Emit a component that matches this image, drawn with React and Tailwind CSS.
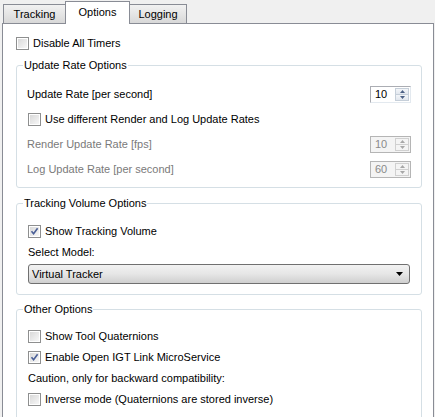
import React from 'react';

const font = { fontFamily: '"Liberation Sans", Arial, sans-serif' };

function CheckBox({ checked, label, className = '' }) {
  return (
    <div className={`flex items-center gap-[4px] ${className}`}>
      <div className="w-[13px] h-[13px] border border-[#8e8f8f] bg-white p-px shrink-0">
        <div className="w-full h-full bg-gradient-to-br from-[#d9d9d9] to-[#f7f7f7] relative">
          {checked && (
            <svg viewBox="0 0 9 9" className="absolute inset-0 w-[9px] h-[9px]">
              <path d="M1.5 4.2 L3.6 6.8 L7.6 1.2" fill="none" stroke="#4a5f97" strokeWidth="1.6" />
            </svg>
          )}
        </div>
      </div>
      <span className="text-[11px] text-black leading-none">{label}</span>
    </div>
  );
}

function Arrow({ up, color }) {
  return (
    <svg viewBox="0 0 5 3" className="w-[5px] h-[3px]">
      <path d={up ? 'M0 3 L2.5 0 L5 3 Z' : 'M0 0 L2.5 3 L5 0 Z'} fill={color} />
    </svg>
  );
}

function SpinBox({ value, disabled }) {
  const arrow = disabled ? '#a7a7a7' : '#4d6185';
  return (
    <div
      className={`w-[41px] h-[17px] border flex items-stretch ${
        disabled ? 'border-[#b5b5b5] bg-[#f4f4f4]' : 'border-[#abadb3] border-r-[#e3e9ef] border-b-[#e3e9ef] bg-white'
      }`}
    >
      <span className={`flex-1 pl-[4px] text-[11px] flex items-center ${disabled ? 'text-[#8a8a8a]' : 'text-black'}`}>
        {value}
      </span>
      <div className="w-[14px] flex flex-col my-px mr-px">
        <div className={`flex-1 flex items-center justify-center border ${disabled ? 'border-[#d0d0d0] bg-[#f4f4f4]' : 'border-[#c6cfd9] bg-gradient-to-b from-[#f4f6f9] to-[#e2e7ee]'}`}>
          <Arrow up color={arrow} />
        </div>
        <div className={`flex-1 flex items-center justify-center border border-t-0 ${disabled ? 'border-[#d0d0d0] bg-[#f4f4f4]' : 'border-[#c6cfd9] bg-gradient-to-b from-[#f4f6f9] to-[#e2e7ee]'}`}>
          <Arrow color={arrow} />
        </div>
      </div>
    </div>
  );
}

function Group({ title, className = '', bodyClass = '', children }) {
  return (
    <fieldset className={`border border-[#d5dfe5] rounded-[3px] ${className}`}>
      <legend className="ml-[6px] px-[1px] h-[15px] leading-[15px] text-[11px] text-black">{title}</legend>
      <div className={bodyClass}>{children}</div>
    </fieldset>
  );
}

export default function App() {
  return (
    <div className="w-[435px] h-[417px] bg-[#f0f0f0] overflow-hidden flex flex-col" style={font}>
      {/* Tabs */}
      <div className="h-[23px] flex items-end pl-[3px] shrink-0">
        <div className="w-[62px] h-[19px] border border-b-0 border-r-0 border-[#898c95] bg-gradient-to-b from-[#f2f2f2] to-[#d8d8d8] flex items-center justify-center text-[11px] text-black">
          Tracking
        </div>
        <div className="relative z-10 -mb-px w-[65px] h-[23px] border border-b-0 border-[#898c95] bg-white flex items-center justify-center pb-[1px] text-[11px] text-black">
          Options
        </div>
        <div className="w-[57px] h-[19px] border border-b-0 border-l-0 border-[#898c95] bg-gradient-to-b from-[#f2f2f2] to-[#d8d8d8] flex items-center justify-center text-[11px] text-black">
          Logging
        </div>
      </div>

      {/* Pane */}
      <div className="ml-[2px] w-[432px] flex-1 border border-[#898c95] bg-white pl-[13px] pr-[11px]">
        <CheckBox label="Disable All Timers" className="mt-[9px] h-[20px]" />

        <Group title="Update Rate Options" className="mt-[5px]" bodyClass="px-[10px] pt-[9px] pb-[5px]">
          <div className="h-[25px] flex items-center justify-between">
            <span className="text-[11px] text-black">Update Rate [per second]</span>
            <SpinBox value="10" />
          </div>
          <div className="h-[25px] flex items-center">
            <CheckBox label="Use different Render and Log Update Rates" className="ml-px" />
          </div>
          <div className="h-[25px] flex items-center justify-between">
            <span className="text-[11px] text-[#7a7a7a]">Render Update Rate [fps]</span>
            <SpinBox value="10" disabled />
          </div>
          <div className="h-[25px] flex items-center justify-between">
            <span className="text-[11px] text-[#7a7a7a]">Log Update Rate [per second]</span>
            <SpinBox value="60" disabled />
          </div>
        </Group>

        <Group title="Tracking Volume Options" className="mt-[8px]" bodyClass="px-[11px] pt-[10px] pb-[10px]">
          <CheckBox checked label="Show Tracking Volume" className="h-[20px]" />
          <div className="mt-px h-[20px] flex items-center text-[11px] text-black">Select Model:</div>
          <div className="mt-[2px] h-[20px] border border-[#707070] rounded-[3px] flex items-center justify-between pl-[3px] pr-[6px] bg-gradient-to-b from-[#f2f2f2] via-[#e6e6e6] to-[#cfcfcf]">
            <span className="text-[11px] text-black">Virtual Tracker</span>
            <svg viewBox="0 0 7 4" className="w-[7px] h-[4px]">
              <path d="M0 0 L7 0 L3.5 4 Z" fill="#000" />
            </svg>
          </div>
        </Group>

        <Group title="Other Options" className="mt-[7px]" bodyClass="px-[11px] pt-[9px] pb-[10px]">
          <CheckBox label="Show Tool Quaternions" className="h-[21px]" />
          <CheckBox checked label="Enable Open IGT Link MicroService" className="h-[21px]" />
          <div className="h-[21px] flex items-center text-[11px] text-black">Caution, only for backward compatibility:</div>
          <CheckBox label="Inverse mode (Quaternions are stored inverse)" className="h-[21px]" />
        </Group>
      </div>
    </div>
  );
}
